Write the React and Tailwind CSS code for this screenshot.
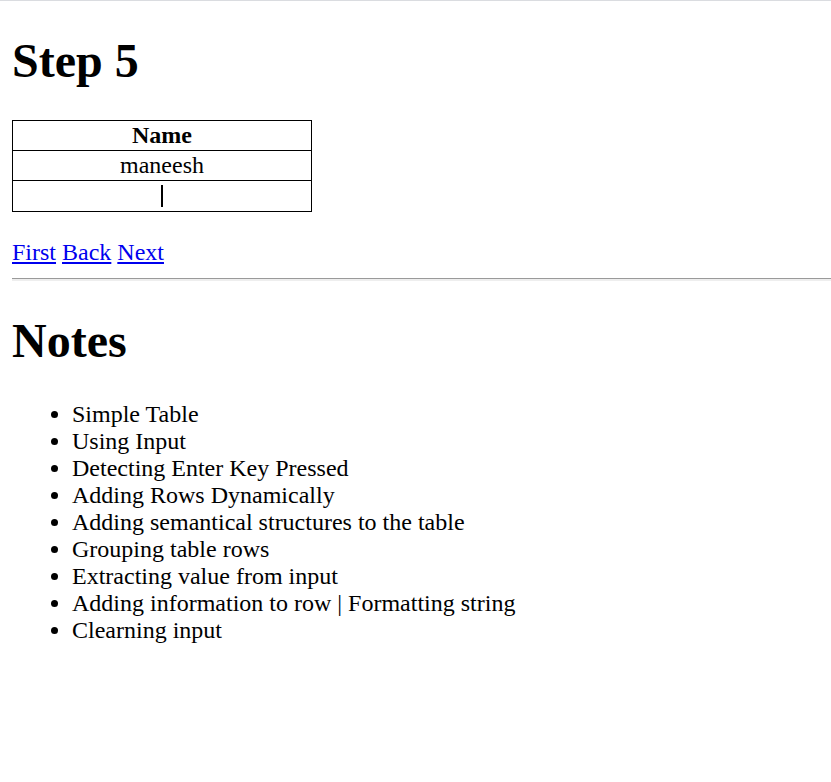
export default function App() {
  const notes = [
    "Simple Table",
    "Using Input",
    "Detecting Enter Key Pressed",
    "Adding Rows Dynamically",
    "Adding semantical structures to the table",
    "Grouping table rows",
    "Extracting value from input",
    "Adding information to row | Formatting string",
    "Clearning input",
  ];
  return (
    <div
      className="min-h-[782px] bg-white text-black border-t border-[#dadce0] pl-[12px] overflow-hidden"
      style={{ fontFamily: '"Liberation Serif", "Times New Roman", serif' }}
    >
      <h1 className="text-[48px] font-bold leading-[55px] mt-[32px] mb-[32px]">Step 5</h1>
      <table className="w-[300px] border-collapse border border-black text-[24px] leading-[27px] text-center">
        <thead>
          <tr className="h-[30px]">
            <th className="border border-black p-0 font-bold">Name</th>
          </tr>
        </thead>
        <tbody>
          <tr className="h-[30px]">
            <td className="border border-black p-0">maneesh</td>
          </tr>
          <tr className="h-[31px]">
            <td className="border border-black p-0">
              <div className="flex justify-center items-center h-[30px]">
                <span className="block w-[2px] h-[22px] bg-black" />
              </div>
            </td>
          </tr>
        </tbody>
      </table>
      <div className="mt-[27px] text-[24px] leading-[27px] flex gap-[6px] text-[#0000ee]">
        <a href="#" className="underline">First</a>
        <a href="#" className="underline">Back</a>
        <a href="#" className="underline">Next</a>
      </div>
      <div className="mt-[12px] h-[3px] border-t border-[#9a9a9a] bg-[#eeeeee]" />
      <h1 className="text-[48px] font-bold leading-[55px] mt-[32px] mb-[33px]">Notes</h1>
      <ul className="list-disc pl-[60px] text-[24px] leading-[27px]">
        {notes.map((n) => (
          <li key={n}>{n}</li>
        ))}
      </ul>
    </div>
  );
}
